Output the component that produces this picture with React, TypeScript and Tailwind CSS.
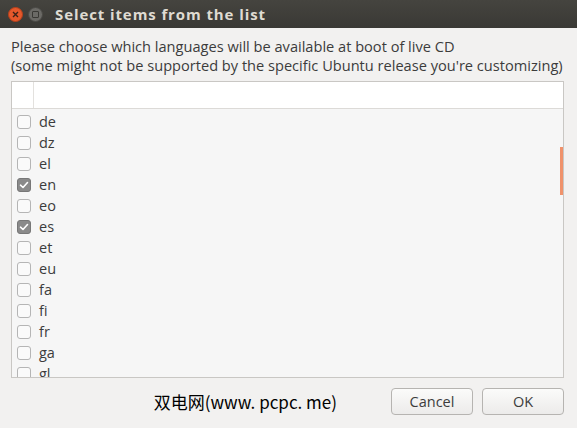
import React from 'react';

const langs: { code: string; checked?: boolean }[] = [
  { code: 'de' },
  { code: 'dz' },
  { code: 'el' },
  { code: 'en', checked: true },
  { code: 'eo' },
  { code: 'es', checked: true },
  { code: 'et' },
  { code: 'eu' },
  { code: 'fa' },
  { code: 'fi' },
  { code: 'fr' },
  { code: 'ga' },
  { code: 'gl' },
];

const Check: React.FC<{ on?: boolean }> = ({ on }) =>
  on ? (
    <span className="w-[14px] h-[14px] rounded-[3px] bg-[#8a8a8a] border border-[#777] flex items-center justify-center">
      <svg width="10" height="10" viewBox="0 0 10 10">
        <path d="M1.5 5.2 L4 7.5 L8.5 2.5" stroke="#fff" strokeWidth="1.6" fill="none" strokeLinecap="round" strokeLinejoin="round" />
      </svg>
    </span>
  ) : (
    <span className="w-[14px] h-[14px] rounded-[3px] bg-[#fafafa] border border-[#b5b5b5]" />
  );

export default function App() {
  return (
    <div className="w-[577px] h-[428px] bg-[#f2f1f0] flex flex-col overflow-hidden" style={{ fontFamily: '"Open Sans", "Noto Sans", sans-serif' }}>
      {/* title bar */}
      <div className="h-[28px] bg-gradient-to-b from-[#45443f] to-[#3a3935] flex items-center pl-[8px] shrink-0">
        <span className="w-[15px] h-[15px] rounded-full bg-[#e5582b] border border-[#b7401b] flex items-center justify-center">
          <svg width="7" height="7" viewBox="0 0 7 7">
            <path d="M1 1 L6 6 M6 1 L1 6" stroke="#3b2218" strokeWidth="1.4" />
          </svg>
        </span>
        <span className="ml-[5px] w-[15px] h-[15px] rounded-full bg-[#6b6a66] border border-[#4a4945] flex items-center justify-center">
          <span className="w-[7px] h-[7px] border border-[#3a3935] rounded-[1px]" />
        </span>
        <span className="ml-[12px] text-[#dfdbd2] text-[15px] font-bold tracking-[0.9px]">Select items from the list</span>
      </div>

      <div className="px-[11px] pt-[9px] text-[#3c3c3c] text-[14.6px] leading-[19px]">
        <div>Please choose which languages will be available at boot of live CD</div>
        <div>(some might not be supported by the specific Ubuntu release you're customizing)</div>
      </div>

      <div className="mx-[11px] mt-[6px] w-[553px] h-[297px] border border-[#c9c7c4] bg-[#f6f6f6] flex flex-col relative overflow-hidden">
        <div className="h-[27px] bg-white border-b border-[#dcdad7] flex shrink-0">
          <div className="w-[22px] border-r border-[#e3e1de]" />
        </div>
        <div className="flex flex-col pt-[2px]">
          {langs.map((l) => (
            <div key={l.code} className="h-[21px] flex items-center pl-[5px] shrink-0">
              <Check on={l.checked} />
              <span className="ml-[8px] text-[14.5px] text-[#3c3c3c]">{l.code}</span>
            </div>
          ))}
        </div>
        <div className="absolute right-0 top-[65px] w-[3px] h-[48px] bg-[#f0926b]" />
      </div>

      <div className="flex items-center justify-end px-[13px] mt-[10px]">
        <span className="mr-[54px] text-[17px] text-black" style={{ fontFamily: '"Noto Sans CJK SC", "DejaVu Sans", sans-serif' }}>
          双电网(www. pcpc. me)
        </span>
        <button className="w-[82px] h-[27px] rounded-[4px] border border-[#b6b4b1] bg-gradient-to-b from-[#fbfbfa] to-[#ecebea] text-[14.5px] text-[#3c3c3c]">
          Cancel
        </button>
        <button className="ml-[9px] w-[82px] h-[27px] rounded-[4px] border border-[#b6b4b1] bg-gradient-to-b from-[#fbfbfa] to-[#ecebea] text-[14.5px] text-[#3c3c3c]">
          OK
        </button>
      </div>
    </div>
  );
}
